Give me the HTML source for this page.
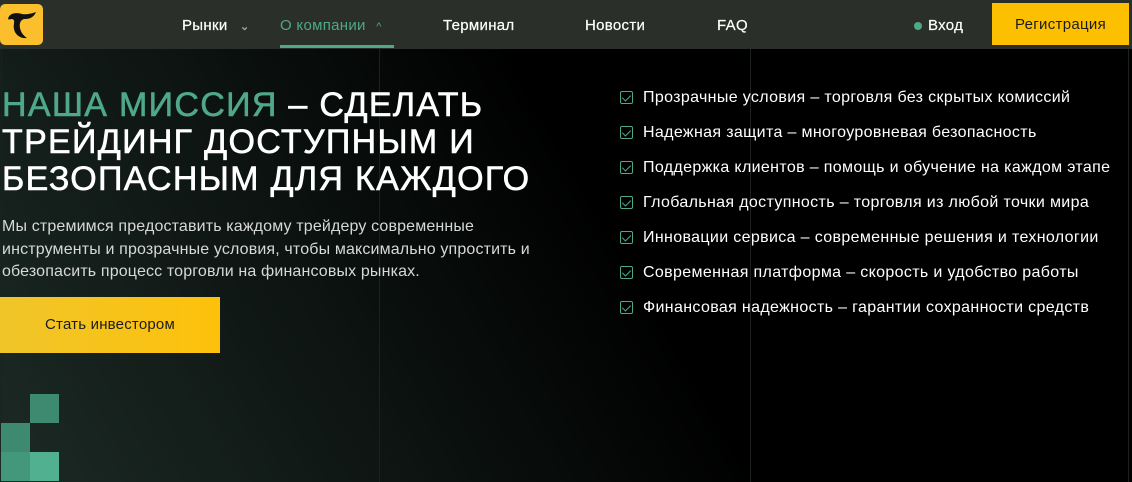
<!DOCTYPE html>
<html><head><meta charset="utf-8"><style>
*{margin:0;padding:0;box-sizing:border-box}
body{width:1132px;height:482px;overflow:hidden;background:#000;font-family:"Liberation Sans",sans-serif;position:relative}
.hdr{position:absolute;left:0;top:0;width:1132px;height:49px;background:#2a2f2a}
.logo{position:absolute;left:0;top:4px;width:43px;height:41px;background:#fbbf2d;border-radius:5px}
.nav{position:absolute;top:17px;color:#fff;font-size:15px;letter-spacing:0.3px;-webkit-text-stroke:0.2px #fff}
.main{position:absolute;left:0;top:49px;width:1132px;height:433px;background:linear-gradient(60deg,#1c2a25 0%,#0d1412 30%,#000 55%)}
.vl{position:absolute;top:49px;width:1px;height:433px;background:#1c201e}
h1{position:absolute;left:2px;top:87px;font-size:34px;line-height:37px;color:#fff;font-weight:normal;letter-spacing:1.3px;-webkit-text-stroke:0.6px #fff}
h1 span{color:#4fa889;-webkit-text-stroke:0.6px #4fa889}
p.d{position:absolute;left:2px;top:216px;font-size:16px;line-height:22.5px;color:#d6d9d8;width:580px;letter-spacing:0.15px}
.btn{position:absolute;left:0;top:297px;width:220px;height:56px;background:linear-gradient(90deg,#f0c52a,#fdc10a);color:#1c1c1c;font-size:15px;line-height:56px;text-align:center;letter-spacing:0.2px}
.li{position:absolute;left:620px;font-size:16px;color:#fff;letter-spacing:0.35px;white-space:nowrap}
.li i{position:absolute;left:0;top:2px;width:13px;height:13px;border:1px solid #4fa889;border-radius:2px}
.li i:after{content:"";position:absolute;left:3px;top:1px;width:4px;height:7px;border:solid #4fa889;border-width:0 1px 1px 0;transform:rotate(45deg)}
.li b{font-weight:normal;margin-left:23px}
.sq{position:absolute;width:29px;height:29px}
</style></head><body>
<div class="main"></div>
<div class="vl" style="left:1px"></div><div class="vl" style="left:379px"></div><div class="vl" style="left:750px"></div><div class="vl" style="left:1128px"></div>
<div class="sq" style="left:30px;top:394px;background:#3d8a70"></div>
<div class="sq" style="left:1px;top:423px;background:#3d8a70"></div>
<div class="sq" style="left:1px;top:452px;background:#43977b"></div>
<div class="sq" style="left:30px;top:452px;background:#50b08f"></div>
<div class="hdr">
<div class="logo"><svg width="43" height="41" viewBox="0 0 43 41"><path d="M8 15 C9 9 16 8 22 10 C27 11 33 9 36 8 C34 13 30 15 25 15 C21 15 19 19 20 24 C21 29 24 32 27 34 C21 35 15 31 14 25 C13 20 16 16 12 15 C10 15 9 16 8 15Z" fill="#111"/></svg></div>
<div class="nav" style="left:182px">Рынки <span style="color:#6a8a7c;font-size:11px;margin-left:8px">&#8964;</span></div>
<div class="nav" style="left:280px;color:#4fa889;-webkit-text-stroke:0">О компании <span style="font-size:11px;margin-left:6px">^</span></div>
<div style="position:absolute;left:280px;top:45px;width:114px;height:3px;background:#4fa889"></div>
<div class="nav" style="left:443px">Терминал</div>
<div class="nav" style="left:585px">Новости</div>
<div class="nav" style="left:717px">FAQ</div>
<div style="position:absolute;left:914px;top:22px;width:8px;height:8px;border-radius:50%;background:#4fa889"></div>
<div class="nav" style="left:928px">Вход</div>
<div style="position:absolute;left:992px;top:3px;width:137px;height:42px;background:#fdc000;color:#1c1c1c;font-size:15px;line-height:44px;text-align:center;letter-spacing:0.3px">Регистрация</div>
</div>
<h1><span>НАША МИССИЯ</span> – СДЕЛАТЬ<br>ТРЕЙДИНГ ДОСТУПНЫМ И<br>БЕЗОПАСНЫМ ДЛЯ КАЖДОГО</h1>
<p class="d">Мы стремимся предоставить каждому трейдеру современные<br>инструменты и прозрачные условия, чтобы максимально упростить и<br>обезопасить процесс торговли на финансовых рынках.</p>
<div class="btn">Стать инвестором</div>
<div class="li" style="top:89px"><i></i><b>Прозрачные условия – торговля без скрытых комиссий</b></div>
<div class="li" style="top:124px"><i></i><b>Надежная защита – многоуровневая безопасность</b></div>
<div class="li" style="top:159px"><i></i><b>Поддержка клиентов – помощь и обучение на каждом этапе</b></div>
<div class="li" style="top:194px"><i></i><b>Глобальная доступность – торговля из любой точки мира</b></div>
<div class="li" style="top:229px"><i></i><b>Инновации сервиса – современные решения и технологии</b></div>
<div class="li" style="top:264px"><i></i><b>Современная платформа – скорость и удобство работы</b></div>
<div class="li" style="top:299px"><i></i><b>Финансовая надежность – гарантии сохранности средств</b></div>
</body></html>
